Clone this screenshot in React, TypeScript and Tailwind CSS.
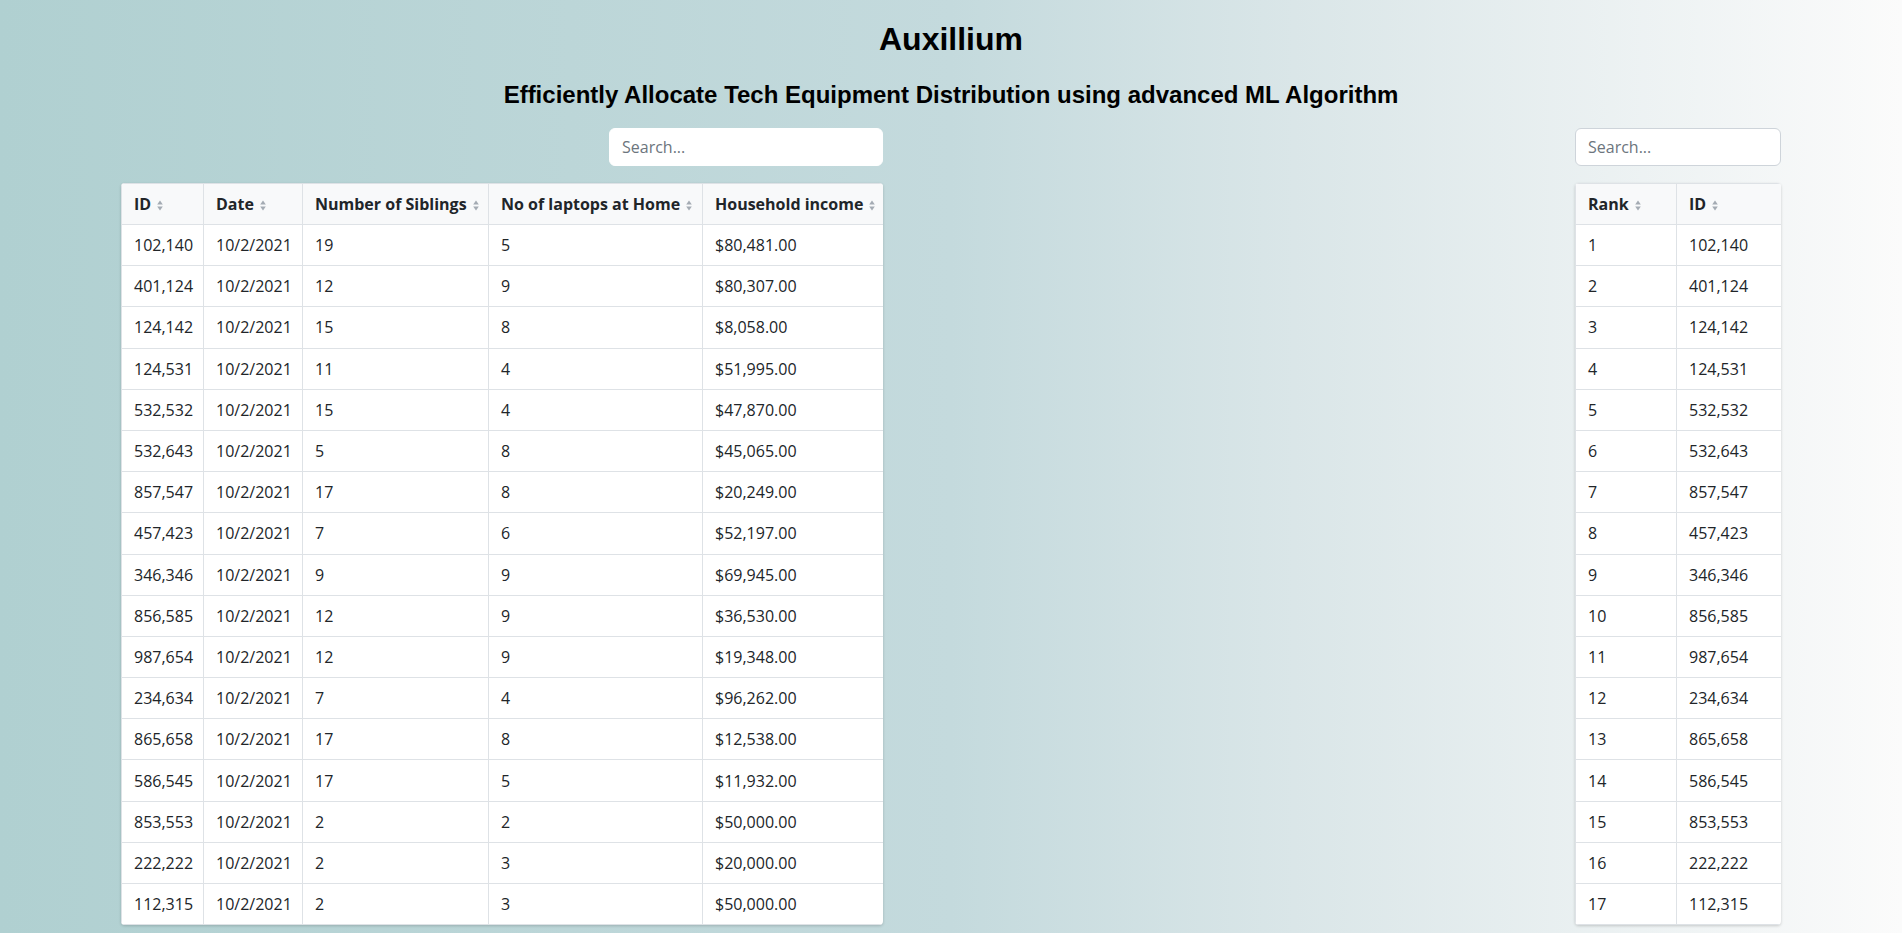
import React from "react";

const rows = [
  ["102,140", "19", "5", "$80,481.00"],
  ["401,124", "12", "9", "$80,307.00"],
  ["124,142", "15", "8", "$8,058.00"],
  ["124,531", "11", "4", "$51,995.00"],
  ["532,532", "15", "4", "$47,870.00"],
  ["532,643", "5", "8", "$45,065.00"],
  ["857,547", "17", "8", "$20,249.00"],
  ["457,423", "7", "6", "$52,197.00"],
  ["346,346", "9", "9", "$69,945.00"],
  ["856,585", "12", "9", "$36,530.00"],
  ["987,654", "12", "9", "$19,348.00"],
  ["234,634", "7", "4", "$96,262.00"],
  ["865,658", "17", "8", "$12,538.00"],
  ["586,545", "17", "5", "$11,932.00"],
  ["853,553", "2", "2", "$50,000.00"],
  ["222,222", "2", "3", "$20,000.00"],
  ["112,315", "2", "3", "$50,000.00"],
];

// little up/down caret shown after every column label
const SortIcon = () => (
  <svg width="6" height="11" viewBox="0 0 6 11" className="ml-[6px] inline-block align-[-1px]">
    <path d="M3 0.5 L5.8 4.4 H0.2 Z" fill="#a4abb3" />
    <path d="M3 10.5 L5.8 6.6 H0.2 Z" fill="#a4abb3" />
  </svg>
);

const Th = ({ label }: { label: string }) => (
  <th className="h-[41px] border border-[#dee2e6] bg-[#f8f9fa] px-3 py-0 text-left font-bold whitespace-nowrap leading-6 text-[#212529]">
    {label}
    <SortIcon />
  </th>
);

const Td = ({ children }: { children: React.ReactNode }) => (
  <td className="h-[41.2px] border border-[#dee2e6] px-3 py-0 leading-6 whitespace-nowrap">{children}</td>
);

const SearchBox = ({ className }: { className: string }) => (
  <input
    placeholder="Search..."
    className={`h-[38px] rounded-[6px] bg-white px-3 text-[16px] text-[#212529] outline-none placeholder:text-[#6c757d] ${className}`}
  />
);

export default function App() {
  return (
    <div
      className="min-h-screen w-full bg-[linear-gradient(to_right,#b0d0d1_0%,#bcd6d8_30%,#c4dadd_50%,#dae6e8_68%,#fbfbfb_100%)] pb-4"
      style={{ fontFamily: '"Open Sans", "Noto Sans", sans-serif' }}
    >
      <h1
        className="pt-[23px] text-center text-[32px] font-bold leading-[32px] text-black"
        style={{ fontFamily: '"Liberation Sans", Arial, sans-serif' }}
      >
        Auxillium
      </h1>
      <h2
        className="mt-[28px] text-center text-[24px] font-bold leading-[24px] text-black"
        style={{ fontFamily: '"Liberation Sans", Arial, sans-serif' }}
      >
        Efficiently Allocate Tech Equipment Distribution using advanced ML Algorithm
      </h2>

      <div className="mt-[21px] flex justify-between px-[121px] text-[16px] text-[#212529]">
        <div className="w-[762px]">
          <div className="mb-[17px] flex justify-end">
            <SearchBox className="w-[274px] border border-white" />
          </div>
          <div className="overflow-hidden rounded-[4px] bg-white shadow-[0_1px_3px_rgba(0,0,0,0.18)]">
            <table className="w-full table-fixed border-collapse">
              <colgroup>
                <col className="w-[82px]" />
                <col className="w-[99px]" />
                <col className="w-[186px]" />
                <col className="w-[214px]" />
                <col className="w-[181px]" />
              </colgroup>
              <thead>
                <tr>
                  <Th label="ID" />
                  <Th label="Date" />
                  <Th label="Number of Siblings" />
                  <Th label="No of laptops at Home" />
                  <Th label="Household income" />
                </tr>
              </thead>
              <tbody>
                {rows.map((r) => (
                  <tr key={r[0]}>
                    <Td>{r[0]}</Td>
                    <Td>10/2/2021</Td>
                    <Td>{r[1]}</Td>
                    <Td>{r[2]}</Td>
                    <Td>{r[3]}</Td>
                  </tr>
                ))}
              </tbody>
            </table>
          </div>
        </div>

        <div className="w-[206px]">
          <div className="mb-[17px]">
            <SearchBox className="w-full border border-[#ced4da]" />
          </div>
          <div className="overflow-hidden rounded-[4px] bg-white shadow-[0_1px_3px_rgba(0,0,0,0.18)]">
            <table className="w-full table-fixed border-collapse">
              <colgroup>
                <col className="w-[101px]" />
                <col className="w-[105px]" />
              </colgroup>
              <thead>
                <tr>
                  <Th label="Rank" />
                  <Th label="ID" />
                </tr>
              </thead>
              <tbody>
                {rows.map((r, i) => (
                  <tr key={r[0]}>
                    <Td>{i + 1}</Td>
                    <Td>{r[0]}</Td>
                  </tr>
                ))}
              </tbody>
            </table>
          </div>
        </div>
      </div>
    </div>
  );
}
